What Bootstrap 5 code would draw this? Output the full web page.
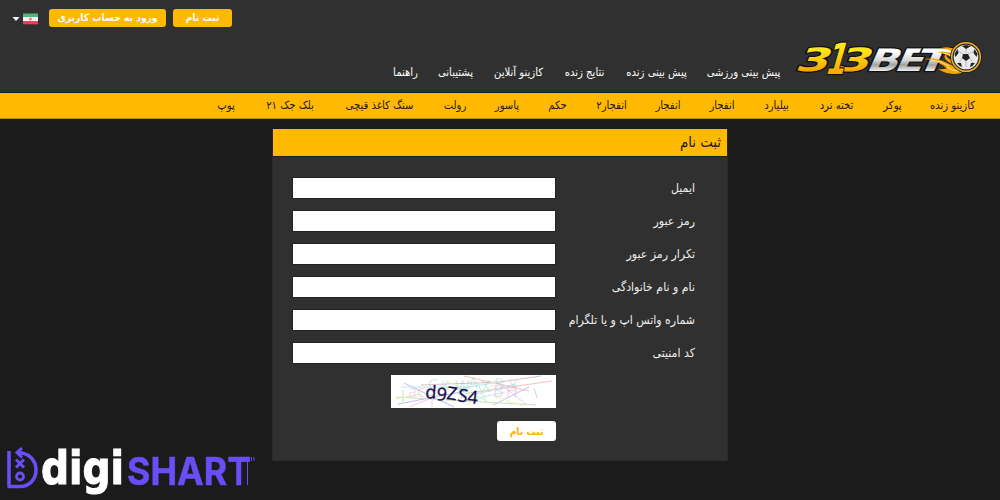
<!DOCTYPE html>
<html lang="fa" dir="rtl">
<head>
    <meta charset="UTF-8">
    <meta name="viewport" content="width=device-width, initial-scale=1">
    <title>ثبت نام</title>
    <link href="https://cdn.jsdelivr.net/npm/bootstrap@5.3.3/dist/css/bootstrap.min.css" rel="stylesheet">
    <style>
        body {
            background: #1b1b1b;
            font-family: "DejaVu Sans Condensed", "DejaVu Sans", sans-serif;
            font-size: 11.2px;
            line-height: 20px;
            height: 500px;
            overflow: hidden;
        }
        a {
            text-decoration: none;
            white-space: nowrap;
        }
        .site-header {
            background: #303030;
            height: 93px;
            border-bottom: 1px solid #151b28;
        }
        .account-bar {
            height: 37px;
            padding: 9px 12px 0 0;
        }
        .account-bar .btn {
            --bs-btn-bg: #ffb900;
            --bs-btn-color: #fff;
            height: 18px;
            padding: 0;
            border: 0;
            border-radius: 3px;
            font-size: 10.2px;
            font-weight: bold;
            line-height: 18px;
        }
        .btn-join { width: 59px; }
        .btn-login { width: 117px; margin-right: 7px; }
        .lang-menu { width: 26px; height: 18px; margin: 0 11px 0 12px; }
        .brand-row { height: 55px; padding-right: 12px; }
        .site-logo { width: 198px; height: 55px; flex: none; }
        .top-menu { gap: 19px; padding: 26px 10px 0 0; }
        .top-menu a { color: #fff; }
        .game-bar {
            background: #ffb900;
            height: 26px;
            gap: 30px;
            padding: 0 26px 0 0;
            border-bottom: 1px solid #b98700;
        }
        .game-bar a { color: #1c1a10; }
        .top-menu a, .game-bar a {
            display: flex;
            justify-content: center;
            flex: none;
        }
        /* column widths of the two menus */
        .w-a { width: 73px; } .w-b { width: 63px; } .w-c { width: 43px; }
        .w-d { width: 51px; } .w-e { width: 37px; } .w-f { width: 25px; }
        .w-g { width: 17px; } .w-h { width: 35px; } .w-i { width: 24px; }
        .w-j { width: 29px; } .w-k { width: 19px; } .w-l { width: 22px; }
        .w-m { width: 69px; } .w-n { width: 50px; } .w-o { width: 18px; }

        .join-box {
            width: 456px;
            height: 332px;
            margin: 10px auto 0;
            background: #303030;
            border: 1px solid #292929;
            border-radius: 0;
        }
        .join-title {
            background: #ffb900;
            color: #1b1b1b;
            height: 28px;
            margin: -1px 0 0;
            padding: 0 6px;
            font-size: 14.8px;
            line-height: 26px;
            border-bottom: 1px solid #1b2029;
        }
        .join-form { padding: 21px 32px 0 20px; }
        .join-line { height: 33px; }
        .join-line label {
            width: 140px;
            color: #eee;
            font-size: 12.2px;
            white-space: nowrap;
        }
        .join-line .form-control {
            width: 262px;
            height: 20px;
            padding: 0 6px;
            border: 1px solid #fff;
            border-radius: 0;
            outline: 1px solid #22222a;
        }
        .captcha { width: 165px; height: 33px; background: #fff; margin: -1px 139px 0 0; }
        .btn-send {
            --bs-btn-bg: #fff;
            --bs-btn-color: #ffb100;
            width: 59px;
            height: 20px;
            padding: 0;
            border: 0;
            border-radius: 3px;
            margin: 13px 139px 0 0;
            font-size: 10.2px;
            font-weight: bold;
            line-height: 19px;
        }
        .partner-logo {
            position: fixed;
            left: 0;
            bottom: 0;
            width: 270px;
            height: 60px;
        }
    </style>
</head>
<body>
<header class="site-header">
    <div class="account-bar d-flex justify-content-end" dir="ltr">
        <div class="d-flex me-auto" dir="rtl">
            <a class="btn btn-join" href="#">ثبت نام</a>
            <a class="btn btn-login" href="#">ورود به حساب کاربری</a>
            <a class="lang-menu" href="#" aria-label="فارسی">
                <svg class="d-block" width="26" height="18" viewBox="12 9 26 18">
                    <path d="M12.500 17h7l-3.500 4z" fill="#fff"/>
                    <path d="M23 13.500h15v3.500H23z" fill="#59ae82"/>
                    <path d="M23 17h15v4H23z" fill="#f5f5f5"/>
                    <path d="M23 21h15v3.300H23z" fill="#e84350"/>
                    <circle cx="30.500" cy="19" r="1" fill="none" stroke="#dc5964"/>
                </svg>
            </a>
        </div>
    </div>
    <div class="brand-row d-flex">
        <a class="site-logo" href="#">
            <svg class="d-block overflow-visible" width="198" height="55" viewBox="790 37 198 55" direction="ltr" font-family="DejaVu Sans" font-weight="bold">
                <defs>
                    <linearGradient id="gold" x1="0" y1="0" x2="0" y2="1">
                        <stop offset=".25" stop-color="#ffe61c"/>
                        <stop offset=".8" stop-color="#f7a600"/>
                    </linearGradient>
                    <linearGradient id="silver" x1="0" y1="0" x2="0" y2="1">
                        <stop offset=".25" stop-color="#fff"/>
                        <stop offset=".5" stop-color="#d5d5d5"/>
                        <stop offset=".62" stop-color="#a2a2a2"/>
                        <stop offset=".8" stop-color="#f2f2f2"/>
                    </linearGradient>
                </defs>
                <g stroke="#111" stroke-width="2.500" stroke-linejoin="round" paint-order="stroke">
                    <g fill="url(#silver)" font-size="31">
                        <text transform="translate(865 71) skewX(-24)" textLength="32" lengthAdjust="spacingAndGlyphs">B</text>
                        <text transform="translate(893 71) skewX(-24)" textLength="29" lengthAdjust="spacingAndGlyphs">E</text>
                        <text transform="translate(913 71) skewX(-24)" textLength="33" lengthAdjust="spacingAndGlyphs">T</text>
                    </g>
                    <g fill="url(#gold)">
                        <text font-size="32" transform="translate(794 71) skewX(-24)" textLength="33" lengthAdjust="spacingAndGlyphs">3</text>
                        <text font-size="32" transform="translate(835 71) skewX(-24)" textLength="33" lengthAdjust="spacingAndGlyphs">3</text>
                        <text font-size="43" transform="translate(824 74) skewX(-16)" textLength="20" lengthAdjust="spacingAndGlyphs">1</text>
                    </g>
                </g>
                <!-- flames trailing the ball -->
                <g fill="#f5a500">
                    <path d="M924 59q12-2 21 3t17 5l-5 5q-8 0-13-6-8-6-20-7z"/>
                    <path d="M938 69q7 1 12-2l13 3-2 3q-12 3-23-4z"/>
                    <path d="M936 52q12-2 17 3l-1 3q-6-5-16-6z"/>
                    <path d="M941 48q9-2 15 2l-2 3q-5-4-13-5z"/>
                    <path d="M946 60q-3-4 0-6 0 5 7 6l3 5q-6-1-10-5z"/>
                </g>
                <path d="M931 60q10 1 18 6M947 67q5 4 12 4M943 53q6 1 10 4" fill="none" stroke="#fff0ac" stroke-width=".9"/>
                <circle cx="966" cy="57" r="15.800" fill="#1b1b1b"/>
                <circle cx="966" cy="57" r="14.300" fill="#292929" stroke="#f4ae22" stroke-width="1.500"/>
                <circle cx="966" cy="57" r="12.300" fill="#e9e9e9"/>
                <path d="M963 54h5l2 4-4 3-4-3zM962 46l4-1 5 1-5 3zM954.500 54l3-5 1 4-3 4zM977.500 54l-3-5-1 4 3 4zM957 63l4 0 1 4q-3-1-5-4zM975 63l-4 0-1 4q3-1 5-4z" fill="#222"/>
                <path d="M963 54l-5-3M968 54l6-3M970 58l3 5M962 58l-3 5M966 61v6M966 49v4" stroke="#999" stroke-width=".6"/>
            </svg>
        </a>
        <nav class="top-menu d-flex">
            <a class="w-a" href="#">پیش بینی ورزشی</a>
            <a class="w-b" href="#">پیش بینی زنده</a>
            <a class="w-c" href="#">نتایج زنده</a>
            <a class="w-d" href="#">کازینو آنلاین</a>
            <a class="w-e" href="#">پشتیبانی</a>
            <a class="w-f" href="#">راهنما</a>
        </nav>
    </div>
</header>
<nav class="game-bar d-flex align-items-center">
    <a class="w-c" href="#">کازینو زنده</a>
    <a class="w-g" href="#">پوکر</a>
    <a class="w-h" href="#">تخته نرد</a>
    <a class="w-f" href="#">بیلیارد</a>
    <a class="w-i" href="#">انفجار</a>
    <a class="w-i" href="#">انفجار</a>
    <a class="w-j" href="#">انفجار۲</a>
    <a class="w-k" href="#">حکم</a>
    <a class="w-l" href="#">پاسور</a>
    <a class="w-l" href="#">رولت</a>
    <a class="w-m" href="#">سنگ کاغذ قیچی</a>
    <a class="w-n" href="#">بلک جک ۲۱</a>
    <a class="w-o" href="#">پوپ</a>
</nav>
<main class="card join-box">
    <h1 class="join-title">ثبت نام</h1>
    <form class="join-form">
        <div class="join-line d-flex"><label for="email">ایمیل</label><input class="form-control" id="email" type="email"></div>
        <div class="join-line d-flex"><label for="pass">رمز عبور</label><input class="form-control" id="pass" type="password"></div>
        <div class="join-line d-flex"><label for="pass2">تکرار رمز عبور</label><input class="form-control" id="pass2" type="password"></div>
        <div class="join-line d-flex"><label for="fullname">نام و نام خانوادگی</label><input class="form-control" id="fullname" type="text"></div>
        <div class="join-line d-flex"><label for="phone">شماره واتس اپ و یا تلگرام</label><input class="form-control" id="phone" type="text"></div>
        <div class="join-line d-flex"><label for="code">کد امنیتی</label><input class="form-control" id="code" type="text"></div>
        <div class="captcha">
            <svg class="d-block" width="165" height="33" direction="ltr" font-family="Open Sans">
                <g font-size="16" opacity=".3">
                    <text x="17" y="22" fill="#dc91c4">ac</text>
                    <text x="37 50 64 77 90 103 117" y="16 15 17 14 17 15 17" fill="#79d1b6">CxWAXBX</text>
                    <text x="102 115" y="22" fill="#d889c3">BH</text>
                </g>
                <g fill="none" stroke-width="1" opacity=".45">
                    <path d="M30 10l79-3 41-6" stroke="#b47484"/>
                    <path d="M77 18l84-12M73 1l65 15" stroke="#ec7777"/>
                    <path d="M13 8l50 24M7 29l68-13M102 30l36-18" stroke="#7470dd"/>
                    <path d="M5 22l140 8M12 15v12M143 13l3 10" stroke="#78be70"/>
                    <path d="M18 32l38-15M41 18v14M106 7l29 22" stroke="#d88dc7"/>
                    <path d="M54 5l51 26M76 30l28-22M5 24l25-5M103 21l29 10" stroke="#d6df75"/>
                    <path d="M10 12h67M86 7l10 21M62 15l45-8M70 23l55-14M66 19l34-3M74 26l40-9" stroke="#74cfcf"/>
                </g>
                <text x="34 45 55 66 76" y="23 25 24 26 28" rotate="4 6 8 10 6" font-size="18" fill="#160a4c" stroke="#160a4c" stroke-width=".3">d9ZS4</text>
            </svg>
        </div>
        <button class="btn btn-send d-block" type="button">ثبت نام</button>
    </form>
</main>
<svg class="partner-logo" viewBox="0 440 270 60" direction="ltr">
    <g fill="none" stroke="#6b4df8" stroke-width="3.600">
        <path d="M9 451v35.500h11c10 0 16-8 16-16.500 0-10-7-17-18-17.500" stroke-linejoin="round"/>
        <path d="M22 448l-5 4.500 5 5" stroke-width="3"/>
        <path d="M16 459.500l8 8M24 459.500l-8 8" stroke-width="3"/>
        <circle cx="20" cy="476.500" r="3.500" stroke-width="2.800"/>
    </g>
    <text x="41" y="484" fill="#fff" stroke="#fff" stroke-width="1.200" font-family="DejaVu Sans" font-weight="bold" font-size="47" textLength="83" lengthAdjust="spacingAndGlyphs">digi</text>
    <text x="127" y="485" fill="#6b4df8" stroke="#6b4df8" stroke-width=".5" font-family="Inter" font-weight="bold" font-size="38.500" textLength="124" lengthAdjust="spacingAndGlyphs">SHART</text>
    <path d="M241.500 462v24M244 462v24" stroke="#1b1b1b" stroke-width=".8"/>
    <path d="M247.500 461v24M251.500 457v4M254 457v4" stroke="#6b4df8"/>
</svg>
<script src="https://cdn.jsdelivr.net/npm/bootstrap@5.3.3/dist/js/bootstrap.bundle.min.js"></script>
</body>
</html>
